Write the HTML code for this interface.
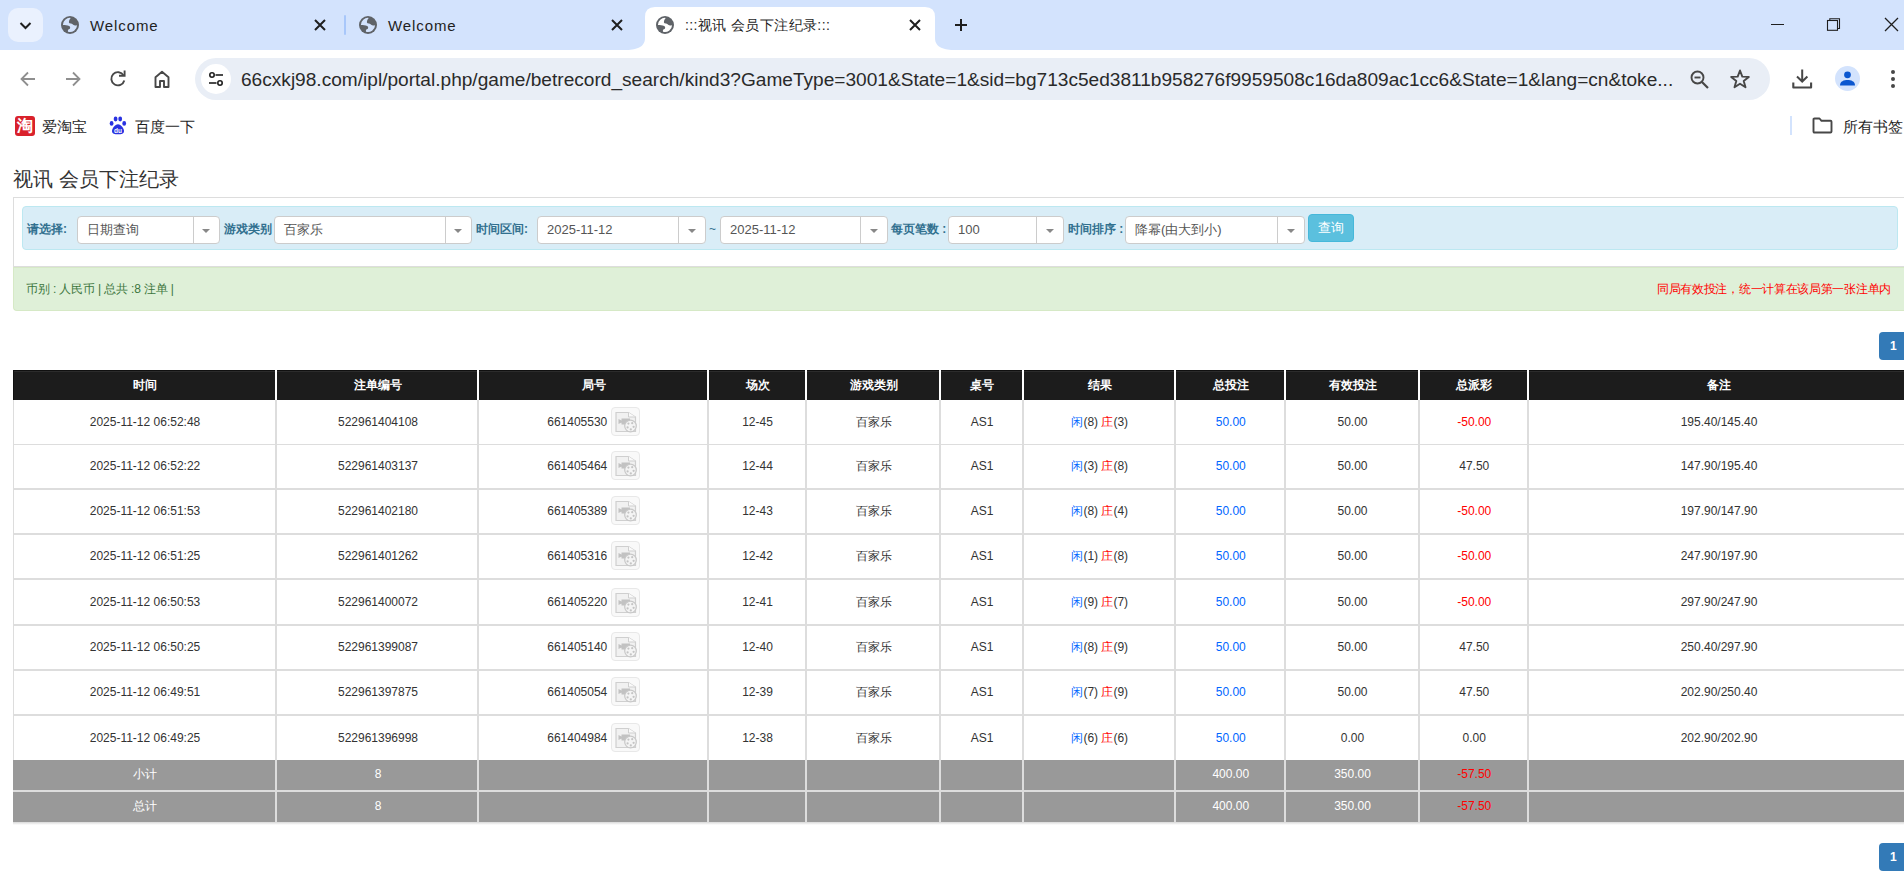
<!DOCTYPE html><html><head><meta charset="utf-8"><style>
*{margin:0;padding:0;box-sizing:border-box}
html,body{width:1904px;height:886px;overflow:hidden;background:#fff;font-family:"Liberation Sans",sans-serif}
.a{position:absolute}
.tabstrip{left:0;top:0;width:1904px;height:50px;background:#d3e3fd}
.tt{font-size:15px;color:#1f1f1f;white-space:nowrap;line-height:18px;letter-spacing:0.9px}
.bm{font-size:15px;color:#1f1f1f;white-space:nowrap;line-height:18px}
.pg{font-family:"Liberation Sans",sans-serif}
.lbl{font-size:12px;font-weight:bold;color:#31708f;white-space:nowrap;line-height:16px}
.sel{height:28px;background:#fff;border:1px solid #ccc;border-radius:4px}
.sel .v{position:absolute;left:9px;top:5px;font-size:13px;color:#555;line-height:16px;white-space:nowrap}
.sel .d{position:absolute;top:0;bottom:0;width:1px;background:#ccc}
.sel .ar{position:absolute;top:12px;width:0;height:0;border-left:4px solid transparent;border-right:4px solid transparent;border-top:4px solid #888}
.cell{position:absolute;display:flex;align-items:center;justify-content:center;font-size:12px;color:#333;white-space:nowrap}
.th{color:#fff;font-weight:bold}
.bt{font-size:12px;line-height:14px;height:14px;color:#333;text-align:center;white-space:nowrap}
.bt span{vertical-align:baseline}
</style></head><body><div class="a tabstrip"></div>
<div class="a" style="left:8px;top:8px;width:35px;height:34px;border-radius:10px;background:#eaf1fe"></div>
<svg class="a" style="left:17px;top:17px" width="17" height="17" viewBox="0 0 17 17"><path d="M3.5 6 L8.5 11 L13.5 6" fill="none" stroke="#1f1f1f" stroke-width="2"/></svg>
<svg class="a" style="left:58px;top:13px" width="24" height="24" viewBox="0 0 24 24"><circle cx="12" cy="12" r="9" fill="#5f6368"/><path d="M4.9 11.9 A7.1 7.1 0 0 1 12.7 4.9 C11 6.5 10.3 9.5 11.5 10.3 C13.5 10.8 14.5 10.8 15.2 11.8 C16 12.7 17.5 12.6 19.1 12.3 A7.1 7.1 0 0 1 10 18.8 C9.8 17.5 9.8 16.5 11 16.2 C12.5 15.8 12.6 13.5 11.2 12.9 C9 12.2 6.5 11.8 4.9 11.9 Z" fill="#d3e3fd"/></svg>
<div class="a tt" style="left:90px;top:17px">Welcome</div>
<svg class="a" style="left:314.0px;top:19.0px" width="12" height="12" viewBox="-1 -1 12 12"><path d="M0 0 L10 10 M10 0 L0 10" stroke="#1f1f1f" stroke-width="2" fill="none"/></svg>
<div class="a" style="left:344px;top:15px;width:2px;height:20px;background:#a8c7fa;border-radius:1px"></div>
<svg class="a" style="left:356px;top:13px" width="24" height="24" viewBox="0 0 24 24"><circle cx="12" cy="12" r="9" fill="#5f6368"/><path d="M4.9 11.9 A7.1 7.1 0 0 1 12.7 4.9 C11 6.5 10.3 9.5 11.5 10.3 C13.5 10.8 14.5 10.8 15.2 11.8 C16 12.7 17.5 12.6 19.1 12.3 A7.1 7.1 0 0 1 10 18.8 C9.8 17.5 9.8 16.5 11 16.2 C12.5 15.8 12.6 13.5 11.2 12.9 C9 12.2 6.5 11.8 4.9 11.9 Z" fill="#d3e3fd"/></svg>
<div class="a tt" style="left:388px;top:17px">Welcome</div>
<svg class="a" style="left:611.0px;top:19.0px" width="12" height="12" viewBox="-1 -1 12 12"><path d="M0 0 L10 10 M10 0 L0 10" stroke="#1f1f1f" stroke-width="2" fill="none"/></svg>
<svg class="a" style="left:625px;top:7px" width="330" height="43" viewBox="0 0 330 43"><path d="M0 43 C10 43 20 41 20 31 L20 10 Q20 0 30 0 L300 0 Q310 0 310 10 L310 31 C310 41 320 43 330 43 Z" fill="#fff"/></svg>
<svg class="a" style="left:653px;top:13px" width="24" height="24" viewBox="0 0 24 24"><circle cx="12" cy="12" r="9" fill="#5f6368"/><path d="M4.9 11.9 A7.1 7.1 0 0 1 12.7 4.9 C11 6.5 10.3 9.5 11.5 10.3 C13.5 10.8 14.5 10.8 15.2 11.8 C16 12.7 17.5 12.6 19.1 12.3 A7.1 7.1 0 0 1 10 18.8 C9.8 17.5 9.8 16.5 11 16.2 C12.5 15.8 12.6 13.5 11.2 12.9 C9 12.2 6.5 11.8 4.9 11.9 Z" fill="#fff"/></svg>
<div class="a tt" style="left:685px;top:16px;font-size:14px;letter-spacing:0.4px">:::视讯 会员下注纪录:::</div>
<svg class="a" style="left:909.0px;top:19.0px" width="12" height="12" viewBox="-1 -1 12 12"><path d="M0 0 L10 10 M10 0 L0 10" stroke="#1f1f1f" stroke-width="2" fill="none"/></svg>
<svg class="a" style="left:954px;top:18px" width="14" height="14" viewBox="0 0 14 14"><path d="M7 1 V13 M1 7 H13" stroke="#1f1f1f" stroke-width="2"/></svg>
<div class="a" style="left:1771px;top:24px;width:13px;height:1px;background:#1f1f1f"></div>
<svg class="a" style="left:1826px;top:17px" width="16" height="16" viewBox="0 0 16 16"><rect x="1.5" y="3.5" width="10" height="9.8" fill="none" stroke="#1f1f1f" stroke-width="1.1"/><path d="M3.8 3.5 V1.8 H13.5 V11.5 H11.5" fill="none" stroke="#1f1f1f" stroke-width="1.1"/></svg>
<svg class="a" style="left:1883px;top:16px" width="17" height="17" viewBox="0 0 17 17"><path d="M2 2 L15 15 M15 2 L2 15" stroke="#1f1f1f" stroke-width="1.3"/></svg>
<svg class="a" style="left:18px;top:69px" width="20" height="20" viewBox="0 0 20 20"><path d="M17 10 H4 M10 3.5 L3.5 10 L10 16.5" fill="none" stroke="#8f8f8f" stroke-width="1.8"/></svg>
<svg class="a" style="left:63px;top:69px" width="20" height="20" viewBox="0 0 20 20"><path d="M3 10 H16 M10 3.5 L16.5 10 L10 16.5" fill="none" stroke="#8f8f8f" stroke-width="1.8"/></svg>
<svg class="a" style="left:108px;top:69px" width="20" height="20" viewBox="0 0 20 20"><path d="M15.6 6.4 A6.6 6.6 0 1 0 16.3 11.5" fill="none" stroke="#474747" stroke-width="1.9"/><path d="M11 6.8 H16.6 V1.4" fill="none" stroke="#474747" stroke-width="1.9"/></svg>
<svg class="a" style="left:152px;top:69px" width="20" height="20" viewBox="0 0 20 20"><path d="M3.5 18 V8.2 L10 2.8 L16.5 8.2 V18 H12 V12 H8 V18 Z" fill="none" stroke="#474747" stroke-width="1.9" stroke-linejoin="round"/></svg>
<div class="a" style="left:195px;top:58px;width:1575px;height:42px;border-radius:21px;background:#e9eef6"></div>
<div class="a" style="left:201px;top:64px;width:30px;height:30px;border-radius:15px;background:#fff"></div>
<svg class="a" style="left:206px;top:69px" width="20" height="20" viewBox="0 0 20 20"><circle cx="6" cy="6" r="2.2" fill="none" stroke="#1f1f1f" stroke-width="1.6"/><path d="M9.5 6 H17" stroke="#1f1f1f" stroke-width="1.6"/><circle cx="14" cy="14" r="2.2" fill="none" stroke="#1f1f1f" stroke-width="1.6"/><path d="M3 14 H10.5" stroke="#1f1f1f" stroke-width="1.6"/></svg>
<div class="a" style="left:241px;top:68.5px;font-size:19.1px;line-height:22px;color:#2a2a2a;white-space:nowrap">66cxkj98.com/ipl/portal.php/game/betrecord_search/kind3?GameType=3001&amp;State=1&amp;sid=bg713c5ed3811b958276f9959508c16da809ac1cc6&amp;State=1&amp;lang=cn&amp;toke...</div>
<svg class="a" style="left:1689px;top:69px" width="22" height="22" viewBox="0 0 22 22"><circle cx="8.5" cy="8.5" r="6" fill="none" stroke="#474747" stroke-width="1.9"/><path d="M5.5 8.5 H11.5" stroke="#474747" stroke-width="1.9"/><path d="M13 13 L19 19" stroke="#474747" stroke-width="2.2"/></svg>
<svg class="a" style="left:1729px;top:68px" width="22" height="22" viewBox="0 0 22 22"><path d="M11 2.5 L13.3 8.6 L19.8 8.9 L14.7 13 L16.5 19.3 L11 15.7 L5.5 19.3 L7.3 13 L2.2 8.9 L8.7 8.6 Z" fill="none" stroke="#474747" stroke-width="1.9" stroke-linejoin="round"/></svg>
<svg class="a" style="left:1791px;top:68px" width="22" height="22" viewBox="0 0 22 22"><path d="M11.2 1.5 V13 M6 8.5 L11.2 13.5 L16.4 8.5" fill="none" stroke="#474747" stroke-width="2"/><path d="M2.3 14.5 V19.5 H20.1 V14.5" fill="none" stroke="#474747" stroke-width="2.1" stroke-linejoin="round"/></svg>
<div class="a" style="left:1835px;top:66px;width:25px;height:25px;border-radius:13px;background:#d3e3fd"></div>
<svg class="a" style="left:1835px;top:66px" width="25" height="25" viewBox="0 0 25 25"><circle cx="12.5" cy="8.8" r="3.4" fill="#0b57d0"/><path d="M5 19.5 C5 15.2 9 14 12.5 14 C16 14 20 15.2 20 19.5 Z" fill="#0b57d0"/></svg>
<div class="a" style="left:1890.5px;top:70px;width:4px;height:4px;border-radius:2px;background:#474747"></div>
<div class="a" style="left:1890.5px;top:77px;width:4px;height:4px;border-radius:2px;background:#474747"></div>
<div class="a" style="left:1890.5px;top:84px;width:4px;height:4px;border-radius:2px;background:#474747"></div>
<div class="a" style="left:15px;top:116px;width:20px;height:20px;border-radius:3px;background:#d9212b"></div>
<div class="a" style="left:15px;top:116px;width:20px;height:20px;color:#fff;font-size:16px;line-height:20px;text-align:center;font-weight:bold">淘</div>
<div class="a bm" style="left:42px;top:118px">爱淘宝</div>
<svg class="a" style="left:109px;top:116px" width="18" height="19" viewBox="0 0 18 19"><ellipse cx="2.6" cy="7.4" rx="1.9" ry="2.3" fill="#2932e1"/><ellipse cx="6.6" cy="3" rx="1.9" ry="2.4" fill="#2932e1"/><ellipse cx="11.2" cy="3" rx="1.9" ry="2.4" fill="#2932e1"/><ellipse cx="15.2" cy="7.4" rx="1.9" ry="2.3" fill="#2932e1"/><path d="M9 8.2 C6 8.2 3 12.5 3 15 C3 17.8 5.5 18.3 9 18.3 C12.5 18.3 15 17.8 15 15 C15 12.5 12 8.2 9 8.2 Z" fill="#2932e1"/><text x="9" y="16.8" font-family="Liberation Sans" font-size="6.5" font-weight="bold" fill="#fff" text-anchor="middle">du</text></svg>
<div class="a bm" style="left:135px;top:118px">百度一下</div>
<div class="a" style="left:1790px;top:116px;width:2px;height:19px;background:#d3e3fd"></div>
<svg class="a" style="left:1812px;top:117px" width="21" height="17" viewBox="0 0 21 17"><path d="M1.5 2.5 Q1.5 1.5 2.5 1.5 H7.5 L9.5 3.8 H18.5 Q19.5 3.8 19.5 4.8 V14.5 Q19.5 15.5 18.5 15.5 H2.5 Q1.5 15.5 1.5 14.5 Z" fill="none" stroke="#474747" stroke-width="1.9" stroke-linejoin="round"/></svg>
<div class="a bm" style="left:1843px;top:118px">所有书签</div>
<div class="a" style="left:13px;top:166px;font-size:20px;line-height:26px;color:#333;white-space:nowrap">视讯 会员下注纪录</div>
<div class="a" style="left:13px;top:197px;width:1900px;height:70px;border:1px solid #ddd;border-right:none;background:#fff"></div>
<div class="a" style="left:22px;top:206px;width:1876px;height:44px;border:1px solid #bce8f1;border-radius:4px;background:#d9edf7"></div>
<div class="a lbl" style="left:27px;top:221px">请选择:</div>
<div class="a sel" style="left:77px;top:216px;width:143px"><div class="v">日期查询</div><div class="d" style="left:115px"></div><div class="ar" style="left:124px"></div></div>
<div class="a lbl" style="left:224px;top:221px">游戏类别</div>
<div class="a sel" style="left:274px;top:216px;width:198px"><div class="v">百家乐</div><div class="d" style="left:170px"></div><div class="ar" style="left:179px"></div></div>
<div class="a lbl" style="left:476px;top:221px">时间区间:</div>
<div class="a sel" style="left:537px;top:216px;width:169px"><div class="v">2025-11-12</div><div class="d" style="left:140px"></div><div class="ar" style="left:150px"></div></div>
<div class="a" style="left:709px;top:221px;font-size:12px;color:#31708f;line-height:16px">~</div>
<div class="a sel" style="left:720px;top:216px;width:168px"><div class="v">2025-11-12</div><div class="d" style="left:139px"></div><div class="ar" style="left:149px"></div></div>
<div class="a lbl" style="left:891px;top:221px">每页笔数 :</div>
<div class="a sel" style="left:948px;top:216px;width:116px"><div class="v">100</div><div class="d" style="left:87px"></div><div class="ar" style="left:97px"></div></div>
<div class="a lbl" style="left:1068px;top:221px">时间排序 :</div>
<div class="a sel" style="left:1125px;top:216px;width:180px"><div class="v">降幂(由大到小)</div><div class="d" style="left:151px"></div><div class="ar" style="left:161px"></div></div>
<div class="a" style="left:1308px;top:214px;width:46px;height:28px;border-radius:4px;background:#5bc0de;border:1px solid #46b8da;color:#fff;font-size:12.5px;line-height:26px;text-align:center">查询</div>
<div class="a" style="left:13px;top:267px;width:1900px;height:44px;background:#dff0d8;border:1px solid #d6e9c6;border-right:none;border-radius:0 0 0 4px"></div>
<div class="a" style="left:26px;top:281px;font-size:12px;line-height:16px;color:#3c763d;white-space:nowrap;letter-spacing:-0.15px">币别 : 人民币 | 总共 :8 注单 |</div>
<div class="a" style="right:13px;top:281px;font-size:12px;line-height:16px;color:#f00;white-space:nowrap;letter-spacing:-0.3px">同局有效投注，统一计算在该局第一张注单内</div>
<div class="a" style="left:1879px;top:332px;width:40px;height:28px;border-radius:4px;background:#337ab7;color:#fff;font-size:12px;font-weight:bold;line-height:28px;padding-left:11px">1</div>
<div class="a" style="left:1879px;top:843px;width:40px;height:28px;border-radius:4px;background:#337ab7;color:#fff;font-size:12px;font-weight:bold;line-height:28px;padding-left:11px">1</div>
<div class="a" style="left:13px;top:370px;width:1894px;height:30px;background:#1c1c1c;border-top:1px solid #101010;border-left:1px solid #101010;box-shadow:inset 0 1px 0 #2b2b2b"></div>
<div class="a" style="left:275px;top:370px;width:2px;height:30px;background:#fff"></div>
<div class="a" style="left:477px;top:370px;width:2px;height:30px;background:#fff"></div>
<div class="a" style="left:706.5px;top:370px;width:2px;height:30px;background:#fff"></div>
<div class="a" style="left:804.5px;top:370px;width:2px;height:30px;background:#fff"></div>
<div class="a" style="left:938.5px;top:370px;width:2px;height:30px;background:#fff"></div>
<div class="a" style="left:1021.5px;top:370px;width:2px;height:30px;background:#fff"></div>
<div class="a" style="left:1174px;top:370px;width:2px;height:30px;background:#fff"></div>
<div class="a" style="left:1283.5px;top:370px;width:2px;height:30px;background:#fff"></div>
<div class="a" style="left:1417.5px;top:370px;width:2px;height:30px;background:#fff"></div>
<div class="a" style="left:1527px;top:370px;width:2px;height:30px;background:#fff"></div>
<div class="cell th" style="left:14px;top:370px;width:262px;height:30px">时间</div>
<div class="cell th" style="left:278px;top:370px;width:200px;height:30px">注单编号</div>
<div class="cell th" style="left:480px;top:370px;width:227.5px;height:30px">局号</div>
<div class="cell th" style="left:709.5px;top:370px;width:96.0px;height:30px">场次</div>
<div class="cell th" style="left:807.5px;top:370px;width:132.0px;height:30px">游戏类别</div>
<div class="cell th" style="left:941.5px;top:370px;width:81.0px;height:30px">桌号</div>
<div class="cell th" style="left:1024.5px;top:370px;width:150.5px;height:30px">结果</div>
<div class="cell th" style="left:1177px;top:370px;width:107.5px;height:30px">总投注</div>
<div class="cell th" style="left:1286.5px;top:370px;width:132.0px;height:30px">有效投注</div>
<div class="cell th" style="left:1420.5px;top:370px;width:107.5px;height:30px">总派彩</div>
<div class="cell th" style="left:1530px;top:370px;width:378px;height:30px">备注</div>
<div class="a" style="left:13px;top:400px;width:1px;height:360px;background:#ddd"></div>
<div class="a" style="left:275px;top:400px;width:2px;height:360px;background:#ddd"></div>
<div class="a" style="left:477px;top:400px;width:2px;height:360px;background:#ddd"></div>
<div class="a" style="left:706.5px;top:400px;width:2px;height:360px;background:#ddd"></div>
<div class="a" style="left:804.5px;top:400px;width:2px;height:360px;background:#ddd"></div>
<div class="a" style="left:938.5px;top:400px;width:2px;height:360px;background:#ddd"></div>
<div class="a" style="left:1021.5px;top:400px;width:2px;height:360px;background:#ddd"></div>
<div class="a" style="left:1174px;top:400px;width:2px;height:360px;background:#ddd"></div>
<div class="a" style="left:1283.5px;top:400px;width:2px;height:360px;background:#ddd"></div>
<div class="a" style="left:1417.5px;top:400px;width:2px;height:360px;background:#ddd"></div>
<div class="a" style="left:1527px;top:400px;width:2px;height:360px;background:#ddd"></div>
<div class="a" style="left:13px;top:444px;width:1894px;height:1px;background:#ddd"></div>
<div class="a" style="left:13px;top:488px;width:1894px;height:2px;background:#ddd"></div>
<div class="a" style="left:13px;top:533px;width:1894px;height:2px;background:#ddd"></div>
<div class="a" style="left:13px;top:578px;width:1894px;height:2px;background:#ddd"></div>
<div class="a" style="left:13px;top:624px;width:1894px;height:2px;background:#ddd"></div>
<div class="a" style="left:13px;top:669px;width:1894px;height:2px;background:#ddd"></div>
<div class="a" style="left:13px;top:714px;width:1894px;height:2px;background:#ddd"></div>
<div class="a bt" style="left:14px;top:414.5px;width:262px">2025-11-12 06:52:48</div>
<div class="a bt" style="left:278px;top:414.5px;width:200px">522961404108</div>
<div class="a bt" style="left:480px;top:414.5px;width:227.5px"><span style="position:relative;padding-right:33px">661405530<span style="position:absolute;right:0;top:-7.5px;width:29px;height:29px;border:1px solid #e8e8e8;border-radius:4px;background:#f9f9f9"><svg style="position:absolute;left:-1px;top:-1px" width="29" height="29" viewBox="0 0 29 29"><path d="M5 5.5 H17.5 L24.5 10 V24.5 H5 Z" fill="#f1f1f1" stroke="#cfcfcf" stroke-width="1.2"/><path d="M17.5 5.5 V10 H24.5" fill="#fafafa" stroke="#cfcfcf" stroke-width="1"/><path d="M10.5 11.5 H19 V17.5 H10.5 Z M7.5 12 L10.5 13.5 V15.5 L7.5 17 Z" fill="#c2c2c2"/><circle cx="19.5" cy="19" r="5.8" fill="#f4f4f4" stroke="#c8c8c8" stroke-width="1.2"/><circle cx="17.4" cy="16.6" r="1.1" fill="#c4c4c4"/><circle cx="21.2" cy="16.2" r="1.1" fill="#c4c4c4"/><circle cx="16.6" cy="20.4" r="1.1" fill="#c4c4c4"/><circle cx="22.6" cy="19.8" r="1.1" fill="#c4c4c4"/><circle cx="19.8" cy="22.4" r="1.1" fill="#c4c4c4"/></svg></span></span></div>
<div class="a bt" style="left:709.5px;top:414.5px;width:96.0px">12-45</div>
<div class="a bt" style="left:807.5px;top:414.5px;width:132.0px">百家乐</div>
<div class="a bt" style="left:941.5px;top:414.5px;width:81.0px">AS1</div>
<div class="a bt" style="left:1024.5px;top:414.5px;width:150.5px"><span style="color:#0066ff">闲</span>(8) <span style="color:#f00">庄</span>(3)</div>
<div class="a bt" style="left:1177px;top:414.5px;width:107.5px"><span style="color:#0066ff">50.00</span></div>
<div class="a bt" style="left:1286.5px;top:414.5px;width:132.0px">50.00</div>
<div class="a bt" style="left:1420.5px;top:414.5px;width:107.5px"><span style="color:#f00">-50.00</span></div>
<div class="a bt" style="left:1530px;top:414.5px;width:378px">195.40/145.40</div>
<div class="a bt" style="left:14px;top:458.5px;width:262px">2025-11-12 06:52:22</div>
<div class="a bt" style="left:278px;top:458.5px;width:200px">522961403137</div>
<div class="a bt" style="left:480px;top:458.5px;width:227.5px"><span style="position:relative;padding-right:33px">661405464<span style="position:absolute;right:0;top:-7.5px;width:29px;height:29px;border:1px solid #e8e8e8;border-radius:4px;background:#f9f9f9"><svg style="position:absolute;left:-1px;top:-1px" width="29" height="29" viewBox="0 0 29 29"><path d="M5 5.5 H17.5 L24.5 10 V24.5 H5 Z" fill="#f1f1f1" stroke="#cfcfcf" stroke-width="1.2"/><path d="M17.5 5.5 V10 H24.5" fill="#fafafa" stroke="#cfcfcf" stroke-width="1"/><path d="M10.5 11.5 H19 V17.5 H10.5 Z M7.5 12 L10.5 13.5 V15.5 L7.5 17 Z" fill="#c2c2c2"/><circle cx="19.5" cy="19" r="5.8" fill="#f4f4f4" stroke="#c8c8c8" stroke-width="1.2"/><circle cx="17.4" cy="16.6" r="1.1" fill="#c4c4c4"/><circle cx="21.2" cy="16.2" r="1.1" fill="#c4c4c4"/><circle cx="16.6" cy="20.4" r="1.1" fill="#c4c4c4"/><circle cx="22.6" cy="19.8" r="1.1" fill="#c4c4c4"/><circle cx="19.8" cy="22.4" r="1.1" fill="#c4c4c4"/></svg></span></span></div>
<div class="a bt" style="left:709.5px;top:458.5px;width:96.0px">12-44</div>
<div class="a bt" style="left:807.5px;top:458.5px;width:132.0px">百家乐</div>
<div class="a bt" style="left:941.5px;top:458.5px;width:81.0px">AS1</div>
<div class="a bt" style="left:1024.5px;top:458.5px;width:150.5px"><span style="color:#0066ff">闲</span>(3) <span style="color:#f00">庄</span>(8)</div>
<div class="a bt" style="left:1177px;top:458.5px;width:107.5px"><span style="color:#0066ff">50.00</span></div>
<div class="a bt" style="left:1286.5px;top:458.5px;width:132.0px">50.00</div>
<div class="a bt" style="left:1420.5px;top:458.5px;width:107.5px">47.50</div>
<div class="a bt" style="left:1530px;top:458.5px;width:378px">147.90/195.40</div>
<div class="a bt" style="left:14px;top:503.5px;width:262px">2025-11-12 06:51:53</div>
<div class="a bt" style="left:278px;top:503.5px;width:200px">522961402180</div>
<div class="a bt" style="left:480px;top:503.5px;width:227.5px"><span style="position:relative;padding-right:33px">661405389<span style="position:absolute;right:0;top:-7.5px;width:29px;height:29px;border:1px solid #e8e8e8;border-radius:4px;background:#f9f9f9"><svg style="position:absolute;left:-1px;top:-1px" width="29" height="29" viewBox="0 0 29 29"><path d="M5 5.5 H17.5 L24.5 10 V24.5 H5 Z" fill="#f1f1f1" stroke="#cfcfcf" stroke-width="1.2"/><path d="M17.5 5.5 V10 H24.5" fill="#fafafa" stroke="#cfcfcf" stroke-width="1"/><path d="M10.5 11.5 H19 V17.5 H10.5 Z M7.5 12 L10.5 13.5 V15.5 L7.5 17 Z" fill="#c2c2c2"/><circle cx="19.5" cy="19" r="5.8" fill="#f4f4f4" stroke="#c8c8c8" stroke-width="1.2"/><circle cx="17.4" cy="16.6" r="1.1" fill="#c4c4c4"/><circle cx="21.2" cy="16.2" r="1.1" fill="#c4c4c4"/><circle cx="16.6" cy="20.4" r="1.1" fill="#c4c4c4"/><circle cx="22.6" cy="19.8" r="1.1" fill="#c4c4c4"/><circle cx="19.8" cy="22.4" r="1.1" fill="#c4c4c4"/></svg></span></span></div>
<div class="a bt" style="left:709.5px;top:503.5px;width:96.0px">12-43</div>
<div class="a bt" style="left:807.5px;top:503.5px;width:132.0px">百家乐</div>
<div class="a bt" style="left:941.5px;top:503.5px;width:81.0px">AS1</div>
<div class="a bt" style="left:1024.5px;top:503.5px;width:150.5px"><span style="color:#0066ff">闲</span>(8) <span style="color:#f00">庄</span>(4)</div>
<div class="a bt" style="left:1177px;top:503.5px;width:107.5px"><span style="color:#0066ff">50.00</span></div>
<div class="a bt" style="left:1286.5px;top:503.5px;width:132.0px">50.00</div>
<div class="a bt" style="left:1420.5px;top:503.5px;width:107.5px"><span style="color:#f00">-50.00</span></div>
<div class="a bt" style="left:1530px;top:503.5px;width:378px">197.90/147.90</div>
<div class="a bt" style="left:14px;top:548.5px;width:262px">2025-11-12 06:51:25</div>
<div class="a bt" style="left:278px;top:548.5px;width:200px">522961401262</div>
<div class="a bt" style="left:480px;top:548.5px;width:227.5px"><span style="position:relative;padding-right:33px">661405316<span style="position:absolute;right:0;top:-7.5px;width:29px;height:29px;border:1px solid #e8e8e8;border-radius:4px;background:#f9f9f9"><svg style="position:absolute;left:-1px;top:-1px" width="29" height="29" viewBox="0 0 29 29"><path d="M5 5.5 H17.5 L24.5 10 V24.5 H5 Z" fill="#f1f1f1" stroke="#cfcfcf" stroke-width="1.2"/><path d="M17.5 5.5 V10 H24.5" fill="#fafafa" stroke="#cfcfcf" stroke-width="1"/><path d="M10.5 11.5 H19 V17.5 H10.5 Z M7.5 12 L10.5 13.5 V15.5 L7.5 17 Z" fill="#c2c2c2"/><circle cx="19.5" cy="19" r="5.8" fill="#f4f4f4" stroke="#c8c8c8" stroke-width="1.2"/><circle cx="17.4" cy="16.6" r="1.1" fill="#c4c4c4"/><circle cx="21.2" cy="16.2" r="1.1" fill="#c4c4c4"/><circle cx="16.6" cy="20.4" r="1.1" fill="#c4c4c4"/><circle cx="22.6" cy="19.8" r="1.1" fill="#c4c4c4"/><circle cx="19.8" cy="22.4" r="1.1" fill="#c4c4c4"/></svg></span></span></div>
<div class="a bt" style="left:709.5px;top:548.5px;width:96.0px">12-42</div>
<div class="a bt" style="left:807.5px;top:548.5px;width:132.0px">百家乐</div>
<div class="a bt" style="left:941.5px;top:548.5px;width:81.0px">AS1</div>
<div class="a bt" style="left:1024.5px;top:548.5px;width:150.5px"><span style="color:#0066ff">闲</span>(1) <span style="color:#f00">庄</span>(8)</div>
<div class="a bt" style="left:1177px;top:548.5px;width:107.5px"><span style="color:#0066ff">50.00</span></div>
<div class="a bt" style="left:1286.5px;top:548.5px;width:132.0px">50.00</div>
<div class="a bt" style="left:1420.5px;top:548.5px;width:107.5px"><span style="color:#f00">-50.00</span></div>
<div class="a bt" style="left:1530px;top:548.5px;width:378px">247.90/197.90</div>
<div class="a bt" style="left:14px;top:595px;width:262px">2025-11-12 06:50:53</div>
<div class="a bt" style="left:278px;top:595px;width:200px">522961400072</div>
<div class="a bt" style="left:480px;top:595px;width:227.5px"><span style="position:relative;padding-right:33px">661405220<span style="position:absolute;right:0;top:-7.5px;width:29px;height:29px;border:1px solid #e8e8e8;border-radius:4px;background:#f9f9f9"><svg style="position:absolute;left:-1px;top:-1px" width="29" height="29" viewBox="0 0 29 29"><path d="M5 5.5 H17.5 L24.5 10 V24.5 H5 Z" fill="#f1f1f1" stroke="#cfcfcf" stroke-width="1.2"/><path d="M17.5 5.5 V10 H24.5" fill="#fafafa" stroke="#cfcfcf" stroke-width="1"/><path d="M10.5 11.5 H19 V17.5 H10.5 Z M7.5 12 L10.5 13.5 V15.5 L7.5 17 Z" fill="#c2c2c2"/><circle cx="19.5" cy="19" r="5.8" fill="#f4f4f4" stroke="#c8c8c8" stroke-width="1.2"/><circle cx="17.4" cy="16.6" r="1.1" fill="#c4c4c4"/><circle cx="21.2" cy="16.2" r="1.1" fill="#c4c4c4"/><circle cx="16.6" cy="20.4" r="1.1" fill="#c4c4c4"/><circle cx="22.6" cy="19.8" r="1.1" fill="#c4c4c4"/><circle cx="19.8" cy="22.4" r="1.1" fill="#c4c4c4"/></svg></span></span></div>
<div class="a bt" style="left:709.5px;top:595px;width:96.0px">12-41</div>
<div class="a bt" style="left:807.5px;top:595px;width:132.0px">百家乐</div>
<div class="a bt" style="left:941.5px;top:595px;width:81.0px">AS1</div>
<div class="a bt" style="left:1024.5px;top:595px;width:150.5px"><span style="color:#0066ff">闲</span>(9) <span style="color:#f00">庄</span>(7)</div>
<div class="a bt" style="left:1177px;top:595px;width:107.5px"><span style="color:#0066ff">50.00</span></div>
<div class="a bt" style="left:1286.5px;top:595px;width:132.0px">50.00</div>
<div class="a bt" style="left:1420.5px;top:595px;width:107.5px"><span style="color:#f00">-50.00</span></div>
<div class="a bt" style="left:1530px;top:595px;width:378px">297.90/247.90</div>
<div class="a bt" style="left:14px;top:639.5px;width:262px">2025-11-12 06:50:25</div>
<div class="a bt" style="left:278px;top:639.5px;width:200px">522961399087</div>
<div class="a bt" style="left:480px;top:639.5px;width:227.5px"><span style="position:relative;padding-right:33px">661405140<span style="position:absolute;right:0;top:-7.5px;width:29px;height:29px;border:1px solid #e8e8e8;border-radius:4px;background:#f9f9f9"><svg style="position:absolute;left:-1px;top:-1px" width="29" height="29" viewBox="0 0 29 29"><path d="M5 5.5 H17.5 L24.5 10 V24.5 H5 Z" fill="#f1f1f1" stroke="#cfcfcf" stroke-width="1.2"/><path d="M17.5 5.5 V10 H24.5" fill="#fafafa" stroke="#cfcfcf" stroke-width="1"/><path d="M10.5 11.5 H19 V17.5 H10.5 Z M7.5 12 L10.5 13.5 V15.5 L7.5 17 Z" fill="#c2c2c2"/><circle cx="19.5" cy="19" r="5.8" fill="#f4f4f4" stroke="#c8c8c8" stroke-width="1.2"/><circle cx="17.4" cy="16.6" r="1.1" fill="#c4c4c4"/><circle cx="21.2" cy="16.2" r="1.1" fill="#c4c4c4"/><circle cx="16.6" cy="20.4" r="1.1" fill="#c4c4c4"/><circle cx="22.6" cy="19.8" r="1.1" fill="#c4c4c4"/><circle cx="19.8" cy="22.4" r="1.1" fill="#c4c4c4"/></svg></span></span></div>
<div class="a bt" style="left:709.5px;top:639.5px;width:96.0px">12-40</div>
<div class="a bt" style="left:807.5px;top:639.5px;width:132.0px">百家乐</div>
<div class="a bt" style="left:941.5px;top:639.5px;width:81.0px">AS1</div>
<div class="a bt" style="left:1024.5px;top:639.5px;width:150.5px"><span style="color:#0066ff">闲</span>(8) <span style="color:#f00">庄</span>(9)</div>
<div class="a bt" style="left:1177px;top:639.5px;width:107.5px"><span style="color:#0066ff">50.00</span></div>
<div class="a bt" style="left:1286.5px;top:639.5px;width:132.0px">50.00</div>
<div class="a bt" style="left:1420.5px;top:639.5px;width:107.5px">47.50</div>
<div class="a bt" style="left:1530px;top:639.5px;width:378px">250.40/297.90</div>
<div class="a bt" style="left:14px;top:684.5px;width:262px">2025-11-12 06:49:51</div>
<div class="a bt" style="left:278px;top:684.5px;width:200px">522961397875</div>
<div class="a bt" style="left:480px;top:684.5px;width:227.5px"><span style="position:relative;padding-right:33px">661405054<span style="position:absolute;right:0;top:-7.5px;width:29px;height:29px;border:1px solid #e8e8e8;border-radius:4px;background:#f9f9f9"><svg style="position:absolute;left:-1px;top:-1px" width="29" height="29" viewBox="0 0 29 29"><path d="M5 5.5 H17.5 L24.5 10 V24.5 H5 Z" fill="#f1f1f1" stroke="#cfcfcf" stroke-width="1.2"/><path d="M17.5 5.5 V10 H24.5" fill="#fafafa" stroke="#cfcfcf" stroke-width="1"/><path d="M10.5 11.5 H19 V17.5 H10.5 Z M7.5 12 L10.5 13.5 V15.5 L7.5 17 Z" fill="#c2c2c2"/><circle cx="19.5" cy="19" r="5.8" fill="#f4f4f4" stroke="#c8c8c8" stroke-width="1.2"/><circle cx="17.4" cy="16.6" r="1.1" fill="#c4c4c4"/><circle cx="21.2" cy="16.2" r="1.1" fill="#c4c4c4"/><circle cx="16.6" cy="20.4" r="1.1" fill="#c4c4c4"/><circle cx="22.6" cy="19.8" r="1.1" fill="#c4c4c4"/><circle cx="19.8" cy="22.4" r="1.1" fill="#c4c4c4"/></svg></span></span></div>
<div class="a bt" style="left:709.5px;top:684.5px;width:96.0px">12-39</div>
<div class="a bt" style="left:807.5px;top:684.5px;width:132.0px">百家乐</div>
<div class="a bt" style="left:941.5px;top:684.5px;width:81.0px">AS1</div>
<div class="a bt" style="left:1024.5px;top:684.5px;width:150.5px"><span style="color:#0066ff">闲</span>(7) <span style="color:#f00">庄</span>(9)</div>
<div class="a bt" style="left:1177px;top:684.5px;width:107.5px"><span style="color:#0066ff">50.00</span></div>
<div class="a bt" style="left:1286.5px;top:684.5px;width:132.0px">50.00</div>
<div class="a bt" style="left:1420.5px;top:684.5px;width:107.5px">47.50</div>
<div class="a bt" style="left:1530px;top:684.5px;width:378px">202.90/250.40</div>
<div class="a bt" style="left:14px;top:730.5px;width:262px">2025-11-12 06:49:25</div>
<div class="a bt" style="left:278px;top:730.5px;width:200px">522961396998</div>
<div class="a bt" style="left:480px;top:730.5px;width:227.5px"><span style="position:relative;padding-right:33px">661404984<span style="position:absolute;right:0;top:-7.5px;width:29px;height:29px;border:1px solid #e8e8e8;border-radius:4px;background:#f9f9f9"><svg style="position:absolute;left:-1px;top:-1px" width="29" height="29" viewBox="0 0 29 29"><path d="M5 5.5 H17.5 L24.5 10 V24.5 H5 Z" fill="#f1f1f1" stroke="#cfcfcf" stroke-width="1.2"/><path d="M17.5 5.5 V10 H24.5" fill="#fafafa" stroke="#cfcfcf" stroke-width="1"/><path d="M10.5 11.5 H19 V17.5 H10.5 Z M7.5 12 L10.5 13.5 V15.5 L7.5 17 Z" fill="#c2c2c2"/><circle cx="19.5" cy="19" r="5.8" fill="#f4f4f4" stroke="#c8c8c8" stroke-width="1.2"/><circle cx="17.4" cy="16.6" r="1.1" fill="#c4c4c4"/><circle cx="21.2" cy="16.2" r="1.1" fill="#c4c4c4"/><circle cx="16.6" cy="20.4" r="1.1" fill="#c4c4c4"/><circle cx="22.6" cy="19.8" r="1.1" fill="#c4c4c4"/><circle cx="19.8" cy="22.4" r="1.1" fill="#c4c4c4"/></svg></span></span></div>
<div class="a bt" style="left:709.5px;top:730.5px;width:96.0px">12-38</div>
<div class="a bt" style="left:807.5px;top:730.5px;width:132.0px">百家乐</div>
<div class="a bt" style="left:941.5px;top:730.5px;width:81.0px">AS1</div>
<div class="a bt" style="left:1024.5px;top:730.5px;width:150.5px"><span style="color:#0066ff">闲</span>(6) <span style="color:#f00">庄</span>(6)</div>
<div class="a bt" style="left:1177px;top:730.5px;width:107.5px"><span style="color:#0066ff">50.00</span></div>
<div class="a bt" style="left:1286.5px;top:730.5px;width:132.0px">0.00</div>
<div class="a bt" style="left:1420.5px;top:730.5px;width:107.5px">0.00</div>
<div class="a bt" style="left:1530px;top:730.5px;width:378px">202.90/202.90</div>
<div class="a" style="left:13px;top:760px;width:1894px;height:30px;background:#999"></div>
<div class="a" style="left:275px;top:760px;width:2px;height:30px;background:#ddd"></div>
<div class="a" style="left:477px;top:760px;width:2px;height:30px;background:#ddd"></div>
<div class="a" style="left:706.5px;top:760px;width:2px;height:30px;background:#ddd"></div>
<div class="a" style="left:804.5px;top:760px;width:2px;height:30px;background:#ddd"></div>
<div class="a" style="left:938.5px;top:760px;width:2px;height:30px;background:#ddd"></div>
<div class="a" style="left:1021.5px;top:760px;width:2px;height:30px;background:#ddd"></div>
<div class="a" style="left:1174px;top:760px;width:2px;height:30px;background:#ddd"></div>
<div class="a" style="left:1283.5px;top:760px;width:2px;height:30px;background:#ddd"></div>
<div class="a" style="left:1417.5px;top:760px;width:2px;height:30px;background:#ddd"></div>
<div class="a" style="left:1527px;top:760px;width:2px;height:30px;background:#ddd"></div>
<div class="a bt" style="left:14px;top:766.5px;width:262px;color:#fff">小计</div>
<div class="a bt" style="left:278px;top:766.5px;width:200px;color:#fff">8</div>
<div class="a bt" style="left:1177px;top:766.5px;width:107.5px;color:#fff">400.00</div>
<div class="a bt" style="left:1286.5px;top:766.5px;width:132.0px;color:#fff">350.00</div>
<div class="a bt" style="left:1420.5px;top:766.5px;width:107.5px;color:#fff"><span style="color:#f00">-57.50</span></div>
<div class="a" style="left:13px;top:792px;width:1894px;height:30px;background:#999"></div>
<div class="a" style="left:275px;top:792px;width:2px;height:30px;background:#ddd"></div>
<div class="a" style="left:477px;top:792px;width:2px;height:30px;background:#ddd"></div>
<div class="a" style="left:706.5px;top:792px;width:2px;height:30px;background:#ddd"></div>
<div class="a" style="left:804.5px;top:792px;width:2px;height:30px;background:#ddd"></div>
<div class="a" style="left:938.5px;top:792px;width:2px;height:30px;background:#ddd"></div>
<div class="a" style="left:1021.5px;top:792px;width:2px;height:30px;background:#ddd"></div>
<div class="a" style="left:1174px;top:792px;width:2px;height:30px;background:#ddd"></div>
<div class="a" style="left:1283.5px;top:792px;width:2px;height:30px;background:#ddd"></div>
<div class="a" style="left:1417.5px;top:792px;width:2px;height:30px;background:#ddd"></div>
<div class="a" style="left:1527px;top:792px;width:2px;height:30px;background:#ddd"></div>
<div class="a bt" style="left:14px;top:798.5px;width:262px;color:#fff">总计</div>
<div class="a bt" style="left:278px;top:798.5px;width:200px;color:#fff">8</div>
<div class="a bt" style="left:1177px;top:798.5px;width:107.5px;color:#fff">400.00</div>
<div class="a bt" style="left:1286.5px;top:798.5px;width:132.0px;color:#fff">350.00</div>
<div class="a bt" style="left:1420.5px;top:798.5px;width:107.5px;color:#fff"><span style="color:#f00">-57.50</span></div>
<div class="a" style="left:13px;top:790px;width:1894px;height:2px;background:#ddd"></div>
<div class="a" style="left:13px;top:822px;width:1894px;height:3px;background:linear-gradient(#d8d8d8,#fff)"></div></body></html>
